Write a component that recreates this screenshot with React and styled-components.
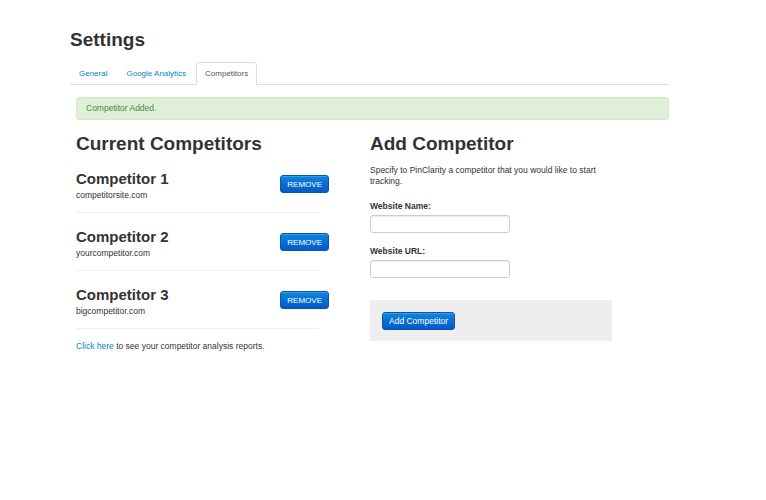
import styled, { createGlobalStyle } from "styled-components";

const GlobalStyle = createGlobalStyle`
  body {
    margin: 0;
    background: #fff;
    color: #333;
    font-family: "Liberation Sans", Arial, sans-serif;
    font-size: 8.5px;
    line-height: 11px;
  }
`;

const competitors = [
  { name: "Competitor 1", site: "competitorsite.com" },
  { name: "Competitor 2", site: "yourcompetitor.com" },
  { name: "Competitor 3", site: "bigcompetitor.com" },
];

const App = () => {
  return (
    <Page>
      <GlobalStyle />
      <Title>Settings</Title>

      <Tabs>
        <Tab>General</Tab>
        <Tab>Google Analytics</Tab>
        <Tab $active>Competitors</Tab>
      </Tabs>

      <Alert>Competitor Added.</Alert>

      <Columns>
        <section>
          <Heading>Current Competitors</Heading>
          {competitors.map((c) => (
            <Item key={c.name}>
              <Row>
                <div>
                  <Name>{c.name}</Name>
                  <Site>{c.site}</Site>
                </div>
                <Button $remove>REMOVE</Button>
              </Row>
            </Item>
          ))}
          <Note>
            <Link href="#">Click here</Link> to see your competitor analysis
            reports.
          </Note>
        </section>

        <section>
          <Heading>Add Competitor</Heading>
          <Intro>
            Specify to PinClarity a competitor that you would like to start
            tracking.
          </Intro>
          <Field>
            <Label>Website Name:</Label>
            <Input type="text" />
          </Field>
          <Field>
            <Label>Website URL:</Label>
            <Input type="text" />
          </Field>
          <Actions>
            <Button>Add Competitor</Button>
          </Actions>
        </section>
      </Columns>
    </Page>
  );
};

export default App;

const Page = styled.div`
  width: 599px;
  padding: 28px 0 40px 70px;
`;

const Title = styled.h1`
  margin: 0 0 11px;
  font-size: 19px;
  line-height: 23px;
  font-weight: bold;
  color: #333;
`;

const Tabs = styled.div`
  display: flex;
  gap: 1px;
  border-bottom: 1px solid #ddd;
`;

const Tab = styled.a`
  display: block;
  padding: 5px 8px;
  margin-bottom: -1px;
  font-size: 8px;
  line-height: 11px;
  border: 1px solid transparent;
  border-radius: 3px 3px 0 0;
  color: ${(p) => (p.$active ? "#555" : "#0088cc")};
  background: ${(p) => (p.$active ? "#fff" : "transparent")};
  ${(p) =>
    p.$active &&
    `
    border-color: #ddd;
    border-bottom-color: #fff;
  `}
`;

const Alert = styled.div`
  margin: 12px 0 12px 6px;
  padding: 5px 9px;
  background: #dff0d8;
  border: 1px solid #d6e9c6;
  border-radius: 3px;
  color: #468847;
`;

const Columns = styled.div`
  display: grid;
  grid-template-columns: 253px 242px;
  column-gap: 41px;
  padding-left: 6px;
`;

const Heading = styled.h2`
  margin: 0;
  font-size: 19px;
  line-height: 23px;
  font-weight: bold;
  color: #333;
`;

const Item = styled.div`
  padding: 15px 0 11px;
  width: 243px;
  border-bottom: 1px solid #eee;
`;

const Row = styled.div`
  display: flex;
  align-items: flex-start;
  justify-content: space-between;
  margin-right: -10px;
`;

const Name = styled.h3`
  margin: 0 0 3px;
  font-size: 15px;
  line-height: 17px;
  font-weight: bold;
  color: #333;
`;

const Site = styled.div`
  line-height: 11px;
`;

const Button = styled.button`
  font-family: "Liberation Sans", Arial, sans-serif;
  font-size: ${(p) => (p.$remove ? "8px" : "8.5px")};
  line-height: 11px;
  margin-top: ${(p) => (p.$remove ? "5px" : "0")};
  padding: 3px 6px 2px;
  color: #fff;
  border: 1px solid #0753b6;
  border-radius: 3px;
  background: linear-gradient(#0d86dc, #0559c9);
  box-shadow: inset 0 1px 0 rgba(255, 255, 255, 0.2);
  cursor: pointer;
`;

const Note = styled.p`
  margin: 12px 0 0;
`;

const Link = styled.a`
  color: #0088cc;
  text-decoration: none;
`;

const Intro = styled.p`
  margin: 10px 0 14px;
`;

const Field = styled.div`
  margin-bottom: 13px;
`;

const Label = styled.label`
  display: block;
  font-weight: bold;
  margin-bottom: 3px;
`;

const Input = styled.input`
  display: block;
  box-sizing: border-box;
  width: 140px;
  height: 18px;
  margin: 0;
  border: 1px solid #ccc;
  border-radius: 3px;
  box-shadow: inset 0 1px 1px rgba(0, 0, 0, 0.075);
  background: #fff;
`;

const Actions = styled.div`
  margin-top: 22px;
  padding: 12px 12px 11px;
  background: #eee;
`;
